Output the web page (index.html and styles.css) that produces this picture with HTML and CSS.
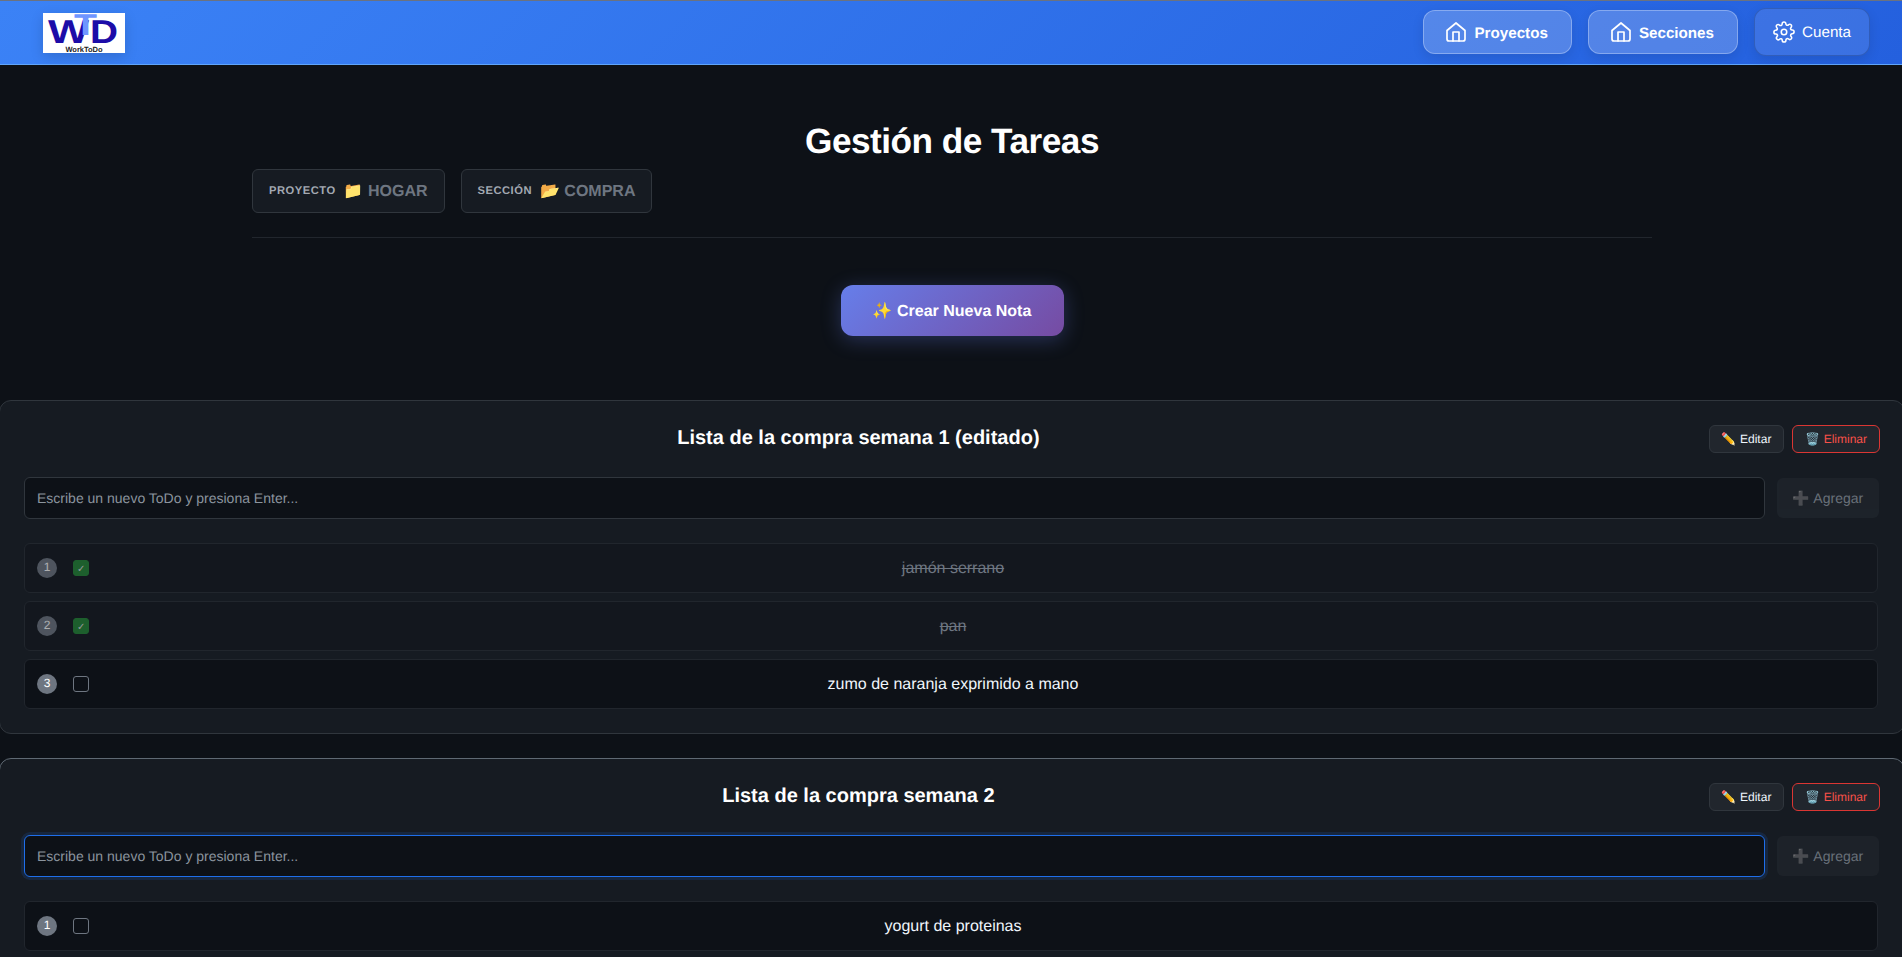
FILE: index.html
```html
<!DOCTYPE html>
<html lang="es">
<head>
  <meta charset="UTF-8">
  <meta name="viewport" content="width=device-width, initial-scale=1.0">
  <title>Gestión de Tareas</title>
  <link rel="stylesheet" href="styles.css">
</head>
<body>

  <header class="topbar">
    <a class="logo" href="#">
      <svg class="logo-img" width="82" height="40" viewBox="0 0 82 40">
        <rect width="82" height="40" fill="#fff"/>
        <text y="30" class="logo-letters">
          <tspan x="5" textLength="41" lengthAdjust="spacingAndGlyphs">W</tspan><tspan x="31" y="22" textLength="23" lengthAdjust="spacingAndGlyphs" class="logo-t">T</tspan><tspan x="47" y="30" textLength="28" lengthAdjust="spacingAndGlyphs">D</tspan>
        </text>
        <text x="41" y="39" text-anchor="middle" class="logo-name">WorkToDo</text>
      </svg>
    </a>
    <nav class="nav">
      <a class="nav-btn" href="#">
        <svg class="nav-icon" viewBox="0 0 24 24"><path d="M3 10.5 12 3l9 7.5V19a2 2 0 0 1-2 2H5a2 2 0 0 1-2-2z"/><path d="M9 21v-9h6v9"/></svg>
        <span class="nav-label">Proyectos</span>
      </a>
      <a class="nav-btn" href="#">
        <svg class="nav-icon" viewBox="0 0 24 24"><path d="M3 10.5 12 3l9 7.5V19a2 2 0 0 1-2 2H5a2 2 0 0 1-2-2z"/><path d="M9 21v-9h6v9"/></svg>
        <span class="nav-label">Secciones</span>
      </a>
      <a class="nav-btn nav-account" href="#">
        <svg class="nav-icon" viewBox="0 0 24 24"><circle cx="12" cy="12" r="3"/><path d="M19.4 15a1.65 1.65 0 0 0 .33 1.82l.06.06a2 2 0 1 1-2.83 2.83l-.06-.06a1.65 1.65 0 0 0-2.82 1.17V21a2 2 0 0 1-4 0v-.09a1.65 1.65 0 0 0-2.82-1.12l-.06.06a2 2 0 1 1-2.83-2.83l.06-.06a1.65 1.65 0 0 0-1.17-2.82H3a2 2 0 0 1 0-4h.09a1.65 1.65 0 0 0 1.12-2.82l-.06-.06a2 2 0 1 1 2.83-2.83l.06.06a1.65 1.65 0 0 0 1.82.33H9a1.65 1.65 0 0 0 1-1.51V3a2 2 0 0 1 4 0v.09a1.65 1.65 0 0 0 2.82 1.12l.06-.06a2 2 0 1 1 2.83 2.83l-.06.06a1.65 1.65 0 0 0 1.17 2.82H21a2 2 0 0 1 0 4h-.09a1.65 1.65 0 0 0-1.51 1z"/></svg>
        <span>Cuenta</span>
      </a>
    </nav>
  </header>

  <main>
    <section class="page-head">
      <h1>Gestión de Tareas</h1>
      <div class="crumbs">
        <div class="crumb"><span class="crumb-label">Proyecto</span><span class="crumb-value">📁 HOGAR</span></div>
        <div class="crumb"><span class="crumb-label">Sección</span><span class="crumb-value">📂 COMPRA</span></div>
      </div>
      <div class="create-row">
        <button class="create-btn">✨ Crear Nueva Nota</button>
      </div>
    </section>

    <section class="note">
      <div class="note-head">
        <h2>Lista de la compra semana 1 (editado)</h2>
        <div class="note-actions">
          <button class="small-btn">✏️ Editar</button>
          <button class="small-btn danger">🗑️ Eliminar</button>
        </div>
      </div>
      <div class="add-row">
        <input type="text" class="add-input" placeholder="Escribe un nuevo ToDo y presiona Enter...">
        <button class="add-btn">➕ Agregar</button>
      </div>
      <ul class="todos">
        <li class="todo done">
          <div class="todo-left"><span class="num">1</span><input type="checkbox" class="check" checked></div>
          <span class="todo-text">jamón serrano</span>
        </li>
        <li class="todo done">
          <div class="todo-left"><span class="num">2</span><input type="checkbox" class="check" checked></div>
          <span class="todo-text">pan</span>
        </li>
        <li class="todo">
          <div class="todo-left"><span class="num">3</span><input type="checkbox" class="check"></div>
          <span class="todo-text">zumo de naranja exprimido a mano</span>
        </li>
      </ul>
    </section>

    <section class="note note-active">
      <div class="note-head">
        <h2>Lista de la compra semana 2</h2>
        <div class="note-actions">
          <button class="small-btn">✏️ Editar</button>
          <button class="small-btn danger">🗑️ Eliminar</button>
        </div>
      </div>
      <div class="add-row">
        <input type="text" class="add-input focused" placeholder="Escribe un nuevo ToDo y presiona Enter...">
        <button class="add-btn">➕ Agregar</button>
      </div>
      <ul class="todos">
        <li class="todo">
          <div class="todo-left"><span class="num">1</span><input type="checkbox" class="check"></div>
          <span class="todo-text">yogurt de proteinas</span>
        </li>
      </ul>
    </section>
  </main>

</body>
</html>
```

FILE: styles.css
```css
* {
  box-sizing: border-box;
}
html, body {
  height: 100%;
  overflow: hidden;
}
body {
  margin: 0;
  background-color: #0d1117;
  color: #f0f6fc;
  font-family: "Liberation Sans", Arial, sans-serif;
  text-rendering: geometricPrecision;
}

/* barra superior */
.topbar {
  height: 65px;
  padding: 0 32px 1px 43px;
  display: flex;
  justify-content: space-between;
  align-items: center;
  background: linear-gradient(135deg, #3b82f6 0%, #2460de 100%);
  border-top: 1px solid #6b7280;
  border-bottom: 1px solid #60a5fa;
}
.logo {
  display: block;
  height: 40px;
  margin-top: 2px;
  box-shadow: 0 4px 12px rgba(0, 0, 0, 0.15);
}
.logo-img {
  display: block;
  overflow: visible;
}
.logo-letters {
  font: bold 33px "Liberation Sans", sans-serif;
  fill: #1c0ca8;
}
.logo-t {
  font-size: 30px;
  fill: #6f96ff;
}
.logo-name {
  font: bold 7.5px "Liberation Sans", sans-serif;
  fill: #222;
}
.nav {
  display: flex;
  align-items: center;
  gap: 16px;
}
.nav-btn {
  height: 44px;
  padding: 0 23px 0 20px;
  display: flex;
  align-items: center;
  gap: 6px;
  color: #fff;
  font-size: 15.2px;
  font-weight: bold;
  text-decoration: none;
  background-color: rgba(255, 255, 255, 0.2);
  border: 1px solid rgba(255, 255, 255, 0.3);
  border-radius: 12px;
  box-shadow: 0 4px 12px rgba(0, 0, 0, 0.1);
}
.nav-label {
  margin-top: 2px;
}
.nav-account {
  height: 48px;
  padding: 0 18px;
  gap: 7px;
  font-size: 15.2px;
  font-weight: normal;
  background-color: rgba(255, 255, 255, 0.1);
  border-color: rgba(0, 0, 0, 0.18);
}
.nav-icon {
  width: 24px;
  height: 24px;
  fill: none;
  stroke: #fff;
  stroke-width: 1.7;
  stroke-linecap: round;
  stroke-linejoin: round;
}
.nav-account .nav-icon {
  width: 22px;
  height: 22px;
}

main {
  width: 1904px;
}

/* cabecera de la pagina */
.page-head {
  max-width: 1400px;
  margin: 0 auto;
}
h1 {
  margin: 0;
  padding-top: 55px;
  font-size: 35.2px;
  line-height: 44px;
  letter-spacing: -0.5px;
  text-align: center;
  color: #fff;
}
.crumbs {
  margin-top: 5px;
  padding-bottom: 24px;
  display: flex;
  gap: 16px;
  border-bottom: 1px solid #21262d;
}
.crumb {
  height: 44px;
  padding: 0 16px;
  display: flex;
  align-items: center;
  gap: 8px;
  background-color: #161b22;
  border: 1px solid #30363d;
  border-radius: 6px;
}
.crumb-label {
  margin-bottom: 1px;
  font-size: 11.2px;
  font-weight: bold;
  letter-spacing: 0.5px;
  text-transform: uppercase;
  color: #a3a9b2;
}
.crumb-value {
  font-size: 16px;
  font-weight: bold;
  color: #6e7681;
}
.create-row {
  padding: 47px 0 64px;
  display: flex;
  justify-content: center;
}
.create-btn {
  width: 223px;
  height: 51px;
  color: #fff;
  font: bold 16px "Liberation Sans", sans-serif;
  text-rendering: geometricPrecision;
  background: linear-gradient(135deg, #667eea 0%, #764ba2 100%);
  border: 0;
  border-radius: 12px;
  box-shadow: 0 4px 20px rgba(102, 126, 234, 0.3);
}

/* notas */
.note {
  margin: 0 -1px 24px;
  padding: 24px;
  background-color: #161b22;
  border: 1px solid #30363d;
  border-radius: 12px;
}
.note-active {
  border-color: #5f6973;
}
.note-head {
  display: flex;
  align-items: flex-start;
  gap: 16px;
}
h2 {
  flex: 1;
  margin: 0;
  font-size: 20px;
  line-height: 26px;
  text-align: center;
  color: #fff;
}
.note-actions {
  display: flex;
  gap: 8px;
}
.small-btn {
  height: 28px;
  padding: 0 12px;
  color: #f0f6fc;
  font: 12px "Liberation Sans", sans-serif;
  text-rendering: geometricPrecision;
  background-color: #21262d;
  border: 1px solid #30363d;
  border-radius: 6px;
}
.small-btn.danger {
  color: #f85149;
  border-color: #da3633;
}
.add-row {
  margin: 24px 1px 0 0;
  display: flex;
  align-items: center;
  gap: 12px;
}
.add-input {
  flex: 1;
  height: 42px;
  padding: 0 12px;
  color: #f0f6fc;
  font: 14px "Liberation Sans", sans-serif;
  text-rendering: geometricPrecision;
  background-color: #0d1117;
  border: 1px solid #30363d;
  border-radius: 6px;
  outline: 0;
}
.add-input::placeholder {
  color: #8b949e;
}
.add-input.focused {
  border-color: #1f6feb;
  box-shadow: 0 0 0 3px rgba(31, 111, 235, 0.15);
}
.add-btn {
  width: 102px;
  height: 40px;
  padding: 0;
  color: #8b949e;
  font: 14px "Liberation Sans", sans-serif;
  text-rendering: geometricPrecision;
  background-color: #21262d;
  border: 0;
  border-radius: 6px;
  opacity: 0.7;
}
.todos {
  margin: 24px 2px 0 0;
  padding: 0;
  list-style: none;
  display: flex;
  flex-direction: column;
  gap: 8px;
}
.todo {
  height: 50px;
  padding: 0 12px;
  display: grid;
  grid-template-columns: 1fr auto 1fr;
  align-items: center;
  background-color: #0d1117;
  border: 1px solid #21262d;
  border-radius: 6px;
}
.todo-left {
  display: flex;
  align-items: center;
  gap: 16px;
}
.todo-text {
  margin: 2px 0 0 4px;
  font-size: 16px;
  color: #f0f6fc;
}
.num {
  width: 20px;
  height: 20px;
  display: flex;
  justify-content: center;
  align-items: center;
  padding-bottom: 3px;
  color: #fff;
  font-size: 12px;
  background-color: #6e7681;
  border-radius: 50%;
}
.check {
  appearance: none;
  width: 16px;
  height: 16px;
  margin: 0;
  display: flex;
  justify-content: center;
  align-items: center;
  background-color: transparent;
  border: 1px solid #6e7681;
  border-radius: 3px;
}
.check:checked {
  background-color: #238636;
  border-color: #238636;
}
.check:checked::after {
  content: "✓";
  color: #ddd;
  font-size: 10px;
}
.todo.done {
  background-color: #13171e;
}
.todo.done .todo-text {
  color: #6e7681;
  text-decoration: line-through;
}
.todo.done .num,
.todo.done .check {
  opacity: 0.65;
}
```
